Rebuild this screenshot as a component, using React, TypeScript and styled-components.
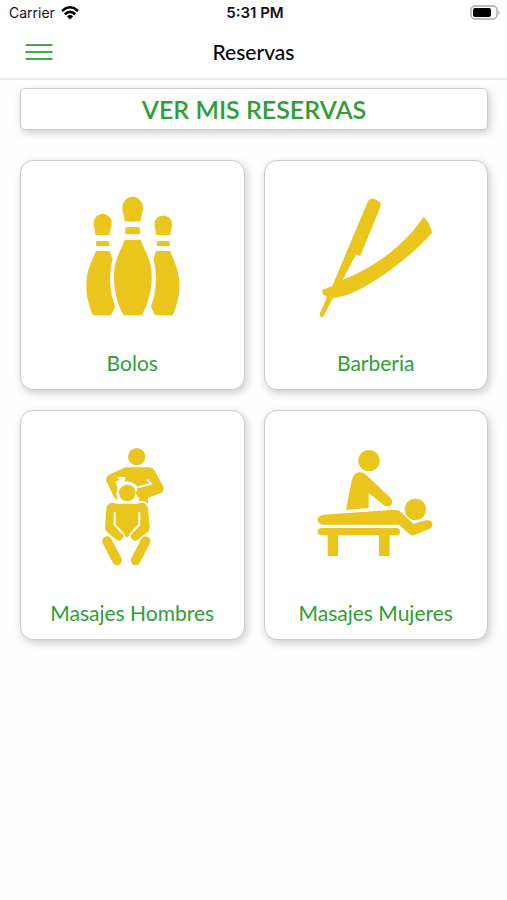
import React from 'react';
import styled, { createGlobalStyle } from 'styled-components';

const GREEN = '#2f9e35';
const GOLD = '#eac51c';

const GlobalStyle = createGlobalStyle`
  *, *::before, *::after { box-sizing: border-box; }
  body {
    margin: 0;
    background: #fefefe;
    font-family: Lato, 'Liberation Sans', sans-serif;
  }
  button { font-family: inherit; cursor: pointer; }
`;

const Screen = styled.div`
  min-height: 100vh;
  display: flex;
  flex-direction: column;
`;

const StatusBar = styled.div`
  display: grid;
  grid-template-columns: 1fr auto 1fr;
  align-items: center;
  height: 26px;
  padding: 0 6px 0 9px;
  background: #fff;
  color: #111;
  font-family: Inter, 'Liberation Sans', sans-serif;
  font-size: 14px;
  line-height: 20px;
`;

const Carrier = styled.div`
  display: flex;
  align-items: center;
  gap: 6px;
`;

const Clock = styled.time`
  font-size: 15px;
  font-weight: 600;
`;

const Battery = styled.svg`
  justify-self: end;
`;

const NavBar = styled.header`
  display: grid;
  grid-template-columns: 1fr auto 1fr;
  align-items: center;
  height: 54px;
  padding: 0 20px;
  background: #fff;
  border-bottom: 2px solid #ececec;
`;

const MenuButton = styled.button`
  justify-self: start;
  display: flex;
  padding: 5px;
  border: 0;
  background: none;
  color: #45a84b;
`;

const Title = styled.h1`
  margin: 0;
  color: #0a0a0a;
  font-size: 21px;
  font-weight: 500;
  line-height: 26px;
`;

const Content = styled.main`
  display: flex;
  flex-direction: column;
  gap: 30px;
  padding: 8px 19px 20px 20px;
`;

const ReservationsButton = styled.button`
  height: 42px;
  padding: 0;
  border: 1px solid #cbcbcb;
  border-radius: 5px;
  background: #fff;
  box-shadow: 2px 3px 8px rgba(0, 0, 0, 0.2);
  color: ${GREEN};
  font-size: 25px;
  font-weight: 600;
  line-height: 30px;
`;

const Grid = styled.div`
  display: grid;
  grid-template-columns: 1fr 1fr;
  gap: 20px 19px;
`;

const Card = styled.button`
  display: flex;
  flex-direction: column;
  align-items: center;
  gap: 18px;
  padding: 20px 8px 12px;
  border: 1px solid #cbcbcb;
  border-radius: 13px;
  background: #fff;
  box-shadow: 2px 3px 8px rgba(0, 0, 0, 0.2);
  color: ${GREEN};
  font-size: 21px;
  line-height: 28px;
`;

const Picture = styled.svg`
  width: 150px;
  height: 150px;
  fill: ${GOLD};
`;

const Bowling = () => (
  <Picture viewBox="-54 -12 450 450" aria-hidden="true">
    <path d="M149 108 C148 91 142 84 142 68 A31 33 0 0 1 204 68 C204 84 198 91 197 108 Q173 113 149 108Z" />
    <path d="M152 127 Q173 123 194 127 L196 146 Q173 149 150 146Z" />
    <path d="M149 164 H197 C208 195 230 225 230 276 C230 320 218 360 200 391 H146 C128 360 117 320 117 276 C117 225 138 195 149 164Z" />
    <path d="M61 150 C61 136 56 129 56 114 A27 28 0 0 1 110 114 C110 129 104 136 104 150Z" />
    <path d="M64 168 H101 L103 183 H63Z" />
    <path d="M63 198 H103 L113 223 C104 250 102 300 112 338 L120 365 L108 391 H54 C42 365 34 335 34 300 C34 255 50 230 63 198Z" />
    <path d="M243 150 C243 136 238 129 238 114 A27 28 0 0 1 291 114 C291 129 286 136 286 150Z" />
    <path d="M246 168 H283 L285 183 H245Z" />
    <path d="M243 198 H286 C297 230 313 255 313 300 C313 335 305 365 293 391 H240 L228 365 L236 338 C246 300 244 250 235 223Z" />
  </Picture>
);

const Razor = () => (
  <Picture viewBox="-27 -12 450 450" aria-hidden="true">
    <path d="M174 48 Q180 38 192 41 L206 49 Q215 55 211 65 L151 213 L138 208 L98 284 C183 253 282 184 341 95 Q359 112 366 143 C309 208 226 272 151 312 Q105 336 69 339 L41 392 Q36 399 30 393 Q28 390 31 382 L51 336 L38 326 Q33 315 43 312 L67 303Z" />
  </Picture>
);

const MenMassage = () => (
  <Picture viewBox="-99 -12 450 450" aria-hidden="true">
    <circle cx="140" cy="65" r="26" />
    <path d="M106 97 H178 Q188 98 193 106 L220 155 Q224 168 211 175 L174 188 V219 Q165 204 146 200 Q147 193 149 188 Q137 182 137 170 Q138 162 145 158 Q132 141 113 139 Q92 140 82 158 Q77 177 84 194 L74 190 L49 138 Q46 126 57 119Z" />
    <path d="M76 140 L88 134 L80 127 L91 125 L108 126 L102 143 Q89 146 82 157Z" fill="#fff" />
    <path d="M145 157 L183 146 L171 134" fill="none" stroke="#fff" strokeWidth="6" />
    <circle cx="112" cy="174" r="32" fill="#fff" />
    <circle cx="112" cy="174" r="25" />
    <path d="M150 160 L170 155 V188 H148 Q138 182 138 174 Q139 164 150 160Z" />
    <path
      d="M66 203 Q88 208 111 206 Q134 208 156 203 Q172 205 174 220 L179 277 Q179 285 173 291 L142 315 Q131 321 124 309 L120 298 L111 308 L102 298 L98 309 Q92 321 80 315 L51 291 Q44 285 45 276 L49 220 Q51 206 66 203Z"
      stroke="#fff"
      strokeWidth="10"
      paintOrder="stroke"
    />
    <path d="M74 232 V269 L102 299 M148 232 V269 L120 299" fill="none" stroke="#fff" strokeWidth="6" />
    <path d="M51 318 L81 376 M167 318 L137 376" fill="none" stroke={GOLD} strokeWidth="29" strokeLinecap="round" />
  </Picture>
);

const WomenMassage = () => (
  <Picture viewBox="-12 -12 450 450" aria-hidden="true">
    <circle cx="192" cy="77" r="32" />
    <path d="M123 224 L140 137 Q146 112 164 111 Q175 111 185 121 L256 188 Q266 198 259 209 Q249 219 237 211 L191 174 V219Z" />
    <circle cx="331" cy="223" r="32" />
    <path d="M55 239 L271 224 Q279 224 285 229 L325 266 L363 256 Q378 253 382 265 Q384 277 373 282 L325 301 Q318 302 312 296 L282 269 H53 Q38 266 38 254 Q39 242 55 239Z" />
    <path d="M50 279 H273 Q285 280 285 290 Q285 301 273 301 H254 V363 H222 V301 H99 V363 H68 V301 H50 Q38 299 38 290 Q38 280 50 279Z" />
  </Picture>
);

const services = [
  { name: 'Bolos', Art: Bowling },
  { name: 'Barberia', Art: Razor },
  { name: 'Masajes Hombres', Art: MenMassage },
  { name: 'Masajes Mujeres', Art: WomenMassage },
];

export default function App() {
  return (
    <Screen>
      <GlobalStyle />
      <StatusBar>
        <Carrier>
          <span>Carrier</span>
          <svg width="18" height="14" viewBox="0 0 18 14" fill="none" stroke="#000" strokeWidth="2.5" aria-label="Wi-Fi">
            <path d="M1 5 Q9 -2.4 17 5" />
            <path d="M3.8 8.2 Q9 3.6 14.2 8.2" />
            <path d="M9 13.5 L5.8 10.3 Q9 7.8 12.2 10.3Z" fill="#000" stroke="none" />
          </svg>
        </Carrier>
        <Clock>5:31 PM</Clock>
        <Battery width="31" height="16" viewBox="0 0 31 16" aria-label="Battery">
          <rect x="1" y="1" width="26" height="13" rx="4" fill="#fff" stroke="#aaa" strokeWidth="1.5" />
          <rect x="3" y="3" width="18" height="9" rx="2" fill="#000" />
          <path d="M28.5 5 Q31 7.5 28.5 10Z" fill="#aaa" />
        </Battery>
      </StatusBar>
      <NavBar>
        <MenuButton type="button" aria-label="Menu">
          <svg width="28" height="18" viewBox="0 0 28 18" stroke="currentColor" strokeWidth="2">
            <path d="M0.5 2 H27.5 M0.5 9 H27.5 M0.5 16 H27.5" />
          </svg>
        </MenuButton>
        <Title>Reservas</Title>
      </NavBar>
      <Content>
        <ReservationsButton type="button">VER MIS RESERVAS</ReservationsButton>
        <Grid>
          {services.map(({ name, Art }) => (
            <Card key={name} type="button">
              <Art />
              <span>{name}</span>
            </Card>
          ))}
        </Grid>
      </Content>
    </Screen>
  );
}
